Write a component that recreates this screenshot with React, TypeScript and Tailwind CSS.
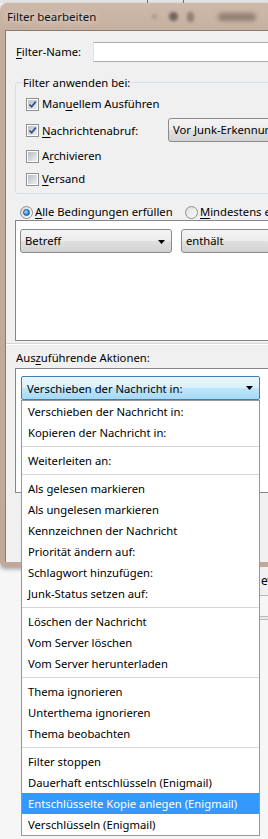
import React from "react";

const MENU: (string | null)[] = [
  "Verschieben der Nachricht in:",
  "Kopieren der Nachricht in:",
  null,
  "Weiterleiten an:",
  null,
  "Als gelesen markieren",
  "Als ungelesen markieren",
  "Kennzeichnen der Nachricht",
  "Priorität ändern auf:",
  "Schlagwort hinzufügen:",
  "Junk-Status setzen auf:",
  null,
  "Löschen der Nachricht",
  "Vom Server löschen",
  "Vom Server herunterladen",
  null,
  "Thema ignorieren",
  "Unterthema ignorieren",
  "Thema beobachten",
  null,
  "Filter stoppen",
  "Dauerhaft entschlüsseln (Enigmail)",
  "Entschlüsselte Kopie anlegen (Enigmail)",
  "Verschlüsseln (Enigmail)",
];

const ACTIVE = "Entschlüsselte Kopie anlegen (Enigmail)";

function Key({ children }: { children: React.ReactNode }) {
  return <span className="underline decoration-1 underline-offset-[2px]">{children}</span>;
}

function Arrow() {
  return (
    <svg width="7" height="4" viewBox="0 0 7 4" aria-hidden="true" className="shrink-0">
      <polygon points="0,0 7,0 3.5,4" fill="#000" />
    </svg>
  );
}

function Checkbox({ checked }: { checked?: boolean }) {
  return (
    <span className="flex size-[13px] shrink-0 items-center justify-center border border-[#8e8f8f] bg-white">
      <span className="flex size-[9px] items-center justify-center bg-[linear-gradient(135deg,#b9bdc3,#eeeff0)]">
        {checked && (
          <svg width="9" height="9" viewBox="0 0 9 9" aria-hidden="true">
            <path d="M1.5 4.5 L3.6 6.8 L7.8 1.6" fill="none" stroke="#2f4f94" strokeWidth="1.7" />
          </svg>
        )}
      </span>
    </span>
  );
}

function Radio({ checked }: { checked?: boolean }) {
  return (
    <span className="flex size-[13px] shrink-0 items-center justify-center rounded-full border border-[#8e8f8f] bg-[linear-gradient(135deg,#d4d6d8,#ffffff)]">
      {checked ? (
        <span className="size-[7px] rounded-full border border-[#1d5283] bg-[radial-gradient(circle_at_35%_35%,#b8e2ff,#2d8ddc_60%,#17569a)]" />
      ) : (
        <span className="size-[9px] rounded-full bg-[linear-gradient(135deg,#e2e3e4,#f8f8f8)]" />
      )}
    </span>
  );
}

function Combo({ children, className }: { children: React.ReactNode; className?: string }) {
  return (
    <div
      className={
        "flex h-[24px] shrink-0 items-center rounded-[3px] border border-[#8a8a8a] bg-[linear-gradient(#f4f4f4_0%,#ececec_49%,#e0e0e0_50%,#d3d3d3_100%)] pl-[4px] pr-[6px] pt-px " +
        (className ?? "")
      }
    >
      {children}
    </div>
  );
}

function ActionMenu() {
  return (
    <div className="absolute left-0 top-full z-10 w-full border border-[#979797] bg-white">
      {MENU.map((item, i) =>
        item === null ? (
          <div key={i} className="flex h-[7px] items-center">
            <div className="h-px w-full bg-[#d7d7d7]" />
          </div>
        ) : (
          <div
            key={i}
            className={
              "flex h-[21px] items-center whitespace-nowrap pl-[6px] pt-[2px] " +
              (item === ACTIVE ? "bg-[#3399ff] text-white" : "")
            }
          >
            {item}
          </div>
        )
      )}
    </div>
  );
}

function TitleBar() {
  return (
    <div className="flex h-[27px] items-center">
      <div className="w-[146px] shrink-0 pl-[2px] pt-px text-[11.5px] text-[#111] [text-shadow:0_0_6px_rgba(255,255,255,0.9)]">
        Filter bearbeiten
      </div>
      <span className="ml-[1px] size-[5px] shrink-0 rounded-full bg-[#8e7c70] opacity-50 blur-[1.5px]" />
      <span className="ml-[12px] size-[9px] shrink-0 rounded-full bg-[#5e5048] opacity-80 blur-[1.5px]" />
      <span className="ml-[9px] h-[10px] w-[7px] shrink-0 rounded-full bg-[#7c6b60] opacity-70 blur-[1.5px]" />
      <span className="ml-[24px] h-[8px] w-[38px] shrink-0 rounded-[4px] bg-[#7a6a60] opacity-70 blur-[2px]" />
    </div>
  );
}

function DialogContent() {
  return (
    <div className="flex h-[532px] flex-col border-l border-t border-[#8c7b6f] bg-[#f0f0f0]">
      {/* Filter name */}
      <div className="mt-[11px] flex h-[20px] items-center pl-[10px]">
        <span className="w-[77px] shrink-0 pt-px">
          <Key>F</Key>ilter-Name:
        </span>
        <div className="h-[20px] flex-1 border border-[#abadb3] border-l-[#e2e3ea] bg-white" />
      </div>

      {/* Apply group */}
      <div className="relative ml-[9px] mt-[20px] rounded-[3px] border border-[#d5dfe5] pb-[4px] pl-[10px] pt-[11px]">
        <span className="absolute left-[6px] top-[-8px] bg-[#f0f0f0] px-[1px] leading-[16px]">
          Filter anwenden bei:
        </span>
        <div className="flex h-[20px] items-center gap-[3px]">
          <Checkbox checked />
          <span className="pt-px">
            Man<Key>u</Key>ellem Ausführen
          </span>
        </div>
        <div className="mt-[2px] flex h-[28px] items-center">
          <Checkbox checked />
          <span className="ml-[3px] w-[126px] shrink-0 pt-[2px]">
            <Key>N</Key>achrichtenabruf:
          </span>
          <Combo className="flex-1 whitespace-nowrap">Vor Junk-Erkennung</Combo>
        </div>
        <div className="mt-[2px] flex h-[20px] items-center gap-[3px]">
          <Checkbox />
          <span className="pt-px">
            A<Key>r</Key>chivieren
          </span>
        </div>
        <div className="mt-[3px] flex h-[20px] items-center gap-[3px]">
          <Checkbox />
          <span className="pt-px">
            <Key>V</Key>ersand
          </span>
        </div>
      </div>

      {/* match mode */}
      <div className="mt-[11px] flex h-[14px] items-center whitespace-nowrap pl-[14px]">
        <Radio checked />
        <span className="ml-[2px] w-[150px] shrink-0 pt-px">
          <Key>A</Key>lle Bedingungen erfüllen
        </span>
        <Radio />
        <span className="ml-[2px] shrink-0 pt-px">
          <Key>M</Key>indestens eine Bedingung erfüllen
        </span>
      </div>

      {/* conditions */}
      <div className="ml-[9px] mt-[1px] flex h-[121px] gap-[9px] border border-[#828790] bg-white pl-[4px] pt-[8px]">
        <Combo className="w-[152px] justify-between">
          <span>Betreff</span>
          <Arrow />
        </Combo>
        <Combo className="w-[120px]">
          <span>enthält</span>
        </Combo>
      </div>

      <div className="mt-[2px] h-px bg-[#d5d5d5]" />
      <div className="h-px bg-white" />

      <div className="mt-[4px] flex h-[16px] items-center pl-[10px] pt-[2px]">
        Aus<Key>z</Key>uführende Aktionen:
      </div>

      {/* actions */}
      <div className="ml-[9px] mt-[3px] h-[125px] border border-[#828790] bg-white pl-[5px] pt-[7px]">
        <div className="relative w-[239px]">
          <div className="flex h-[24px] items-center justify-between rounded-[2px] border border-[#3c7fb1] bg-[linear-gradient(#eaf6fd_0%,#d9f0fc_49%,#bee6fd_50%,#a7d9f5_100%)] pl-[5px] pr-[6px]">
            <span className="pt-[2px]">Verschieben der Nachricht in:</span>
            <Arrow />
          </div>
          <ActionMenu />
        </div>
      </div>
    </div>
  );
}

export default function App() {
  return (
    <div className="relative h-[839px] w-[268px] overflow-hidden bg-[#f6f6f6] font-['Noto_Sans',sans-serif] text-[11.25px] text-black">
      {/* window behind, top edge */}
      <div className="flex h-[3px] bg-[#e4e4e4]">
        <div className="ml-[147px] w-px bg-[#6f6f6f]" />
        <div className="ml-[35px] w-px bg-[#6f6f6f]" />
      </div>

      {/* dialog */}
      <div className="w-[340px] rounded-tl-[7px] rounded-bl-[5px] bg-[linear-gradient(#cdb9aa,#c2ac9c_40px,#c0a999)] pb-[5px] pl-[5px] shadow-[0_2px_4px_rgba(0,0,0,0.35)]">
        <TitleBar />
        <DialogContent />
      </div>

      {/* what lies behind the dialog, below it */}
      <div className="flex">
        <div className="ml-[146px] h-[300px] w-px bg-[#c8c8c8]" />
        <div className="ml-[113px] flex-1">
          <div className="flex h-[28px] items-center bg-[#f0f0f0] pl-[2px] text-[12px]">ev</div>
          <div className="h-px bg-[#b8b8b8]" />
          <div className="mt-[20px] h-[4px] border-y border-[#b9b9b9] bg-[#e8e8e8]" />
        </div>
      </div>
    </div>
  );
}
